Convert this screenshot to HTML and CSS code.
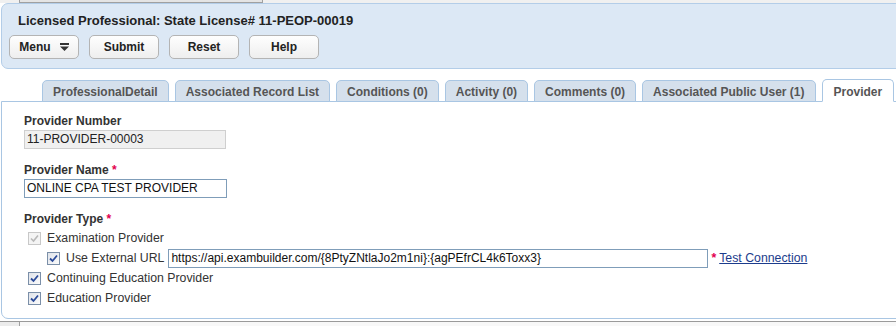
FILE: index.html
```html
<!DOCTYPE html>
<html lang="en">
<head>
  <meta charset="UTF-8" />
  <title>Licensed Professional</title>
  <link rel="stylesheet" href="styles.css">
</head>
<body>
  <div class="topbar"><div class="topbar-box"></div></div>

  <header class="panel-head">
    <div class="title">Licensed Professional: State License# 11-PEOP-00019</div>
    <div class="toolbar">
      <button class="btn btn-menu">Menu
        <svg width="9" height="8" viewBox="0 0 9 8"><rect x="0" y="0" width="9" height="2" fill="#333"/><path d="M0 3.5h9L4.5 8z" fill="#333"/></svg>
      </button>
      <button class="btn">Submit</button>
      <button class="btn">Reset</button>
      <button class="btn">Help</button>
    </div>
  </header>

  <nav class="tabs">
    <a class="tab">ProfessionalDetail</a>
    <a class="tab">Associated Record List</a>
    <a class="tab">Conditions (0)</a>
    <a class="tab">Activity (0)</a>
    <a class="tab">Comments (0)</a>
    <a class="tab">Associated Public User (1)</a>
    <a class="tab active">Provider</a>
  </nav>

  <main class="content">
    <div class="field">
      <label>Provider Number</label>
      <div class="input readonly">11-PROVIDER-00003</div>
    </div>
    <div class="field">
      <label>Provider Name <span class="req">*</span></label>
      <div class="input">ONLINE CPA TEST PROVIDER</div>
    </div>
    <div class="field">
      <label>Provider Type <span class="req">*</span></label>
      <div class="check-row">
        <span class="cb disabled"><svg width="9" height="9" viewBox="0 0 9 9"><path d="M1 4.5l2.5 2.5L8 1.5" fill="none" stroke="#b8b8b8" stroke-width="1.6"/></svg></span>
        <span>Examination Provider</span>
      </div>
      <div class="check-row nested">
        <span class="cb"><svg width="9" height="9" viewBox="0 0 9 9"><path d="M1 4.5l2.5 2.5L8 1.5" fill="none" stroke="#2b4a99" stroke-width="1.8"/></svg></span>
        <span>Use External URL</span>
        <div class="input url">https://api.exambuilder.com/{8PtyZNtlaJo2m1ni}:{agPEfrCL4k6Toxx3}</div>
        <span class="req">*</span>
        <a class="link">Test Connection</a>
      </div>
      <div class="check-row">
        <span class="cb"><svg width="9" height="9" viewBox="0 0 9 9"><path d="M1 4.5l2.5 2.5L8 1.5" fill="none" stroke="#2b4a99" stroke-width="1.8"/></svg></span>
        <span>Continuing Education Provider</span>
      </div>
      <div class="check-row">
        <span class="cb"><svg width="9" height="9" viewBox="0 0 9 9"><path d="M1 4.5l2.5 2.5L8 1.5" fill="none" stroke="#2b4a99" stroke-width="1.8"/></svg></span>
        <span>Education Provider</span>
      </div>
    </div>
  </main>

  <div class="bottombar"><div class="bottombar-box"></div></div>
</body>
</html>
```

FILE: styles.css
```css
body {
  margin: 0;
  font-family: "Liberation Sans", Arial, sans-serif;
  font-size: 12px;
  color: #333;
  background: #fff;
  overflow: hidden;
}
.topbar {
  height: 3px;
  background: #f0f0f0;
  padding-left: 19px;
}
.topbar-box {
  width: 242px;
  height: 2px;
  border: 1px solid #a0a0a0;
  border-top: none;
  background: #e4e4e4;
}
.panel-head {
  margin-left: 1px;
  margin-right: -10px;
  padding: 9px 16px 9px 7px;
  background: #dce8f5;
  border: 1px solid #b3cde8;
  border-radius: 7px 0 0 7px;
}
.title {
  font-size: 13px;
  font-weight: bold;
  color: #222;
  line-height: 16px;
  padding-left: 9px;
}
.toolbar {
  display: flex;
  gap: 10px;
  margin-top: 6px;
}
.btn {
  width: 70px;
  height: 24px;
  display: flex;
  align-items: center;
  justify-content: center;
  gap: 9px;
  font-family: inherit;
  font-size: 12px;
  font-weight: bold;
  color: #222;
  background: linear-gradient(#fefefe, #eeeeee);
  border: 1px solid #b4b4b4;
  border-radius: 5px;
  padding: 0;
}
.tabs {
  display: flex;
  gap: 6px;
  margin-top: 11px;
  padding-left: 42px;
  position: relative;
  z-index: 1;
  margin-bottom: -1px;
  white-space: nowrap;
}
.tab {
  flex-shrink: 0;
  height: 22px;
  line-height: 23px;
  padding: 0 10px;
  font-weight: bold;
  color: #555;
  background: #d5e0ec;
  border: 1px solid #a9c6e3;
  border-radius: 5px 5px 0 0;
  box-sizing: border-box;
}
.tab.active {
  background: #fff;
  border-bottom-color: #fff;
  height: 23px;
  margin-top: -1px;
  line-height: 24px;
  padding: 0 11px;
}
.content {
  margin-left: 1px;
  margin-right: -10px;
  border: 1px solid #a9c6e3;
  border-radius: 0 0 0 7px;
  padding: 12px 22px 13px;
  height: 191px;
}
.field {
  margin-bottom: 14px;
}
.field label {
  display: block;
  font-weight: bold;
  line-height: 14px;
  margin-bottom: 2px;
}
.req {
  color: #e2004f;
  font-weight: bold;
}
.input {
  width: 197px;
  height: 17px;
  line-height: 17px;
  padding: 0 2px;
  border: 1px solid #7f9db9;
  color: #111;
  font-size: 12px;
}
.input.readonly {
  width: 196px;
  background: #f0f0f0;
  border-color: #cfcfcf;
  color: #222;
}
.check-row {
  display: flex;
  align-items: center;
  height: 20px;
  padding-left: 4px;
  color: #333;
  font-size: 12.3px;
}
.check-row.nested {
  padding-left: 23px;
}
.check-row .cb {
  margin-right: 6px;
}
.cb {
  width: 11px;
  height: 11px;
  border: 1px solid #7b8fa8;
  background: linear-gradient(135deg, #dfe3ea, #fbfbfb);
  display: flex;
  align-items: center;
  justify-content: center;
}
.cb.disabled {
  border-color: #c8c8c8;
  background: #f4f4f4;
}
.input.url {
  width: 534px;
  margin-left: 4px;
  margin-right: 3px;
}
.link {
  color: #1c3c8c;
  text-decoration: underline;
  margin-left: 3px;
}
.bottombar {
  margin-top: 2px;
  border-top: 1px solid #9a9a9a;
  height: 6px;
  background: #ececec;
  padding-left: 19px;
}
.bottombar-box {
  height: 6px;
  border-left: 1px solid #a0a0a0;
  background: #f8f8f8;
}
```
